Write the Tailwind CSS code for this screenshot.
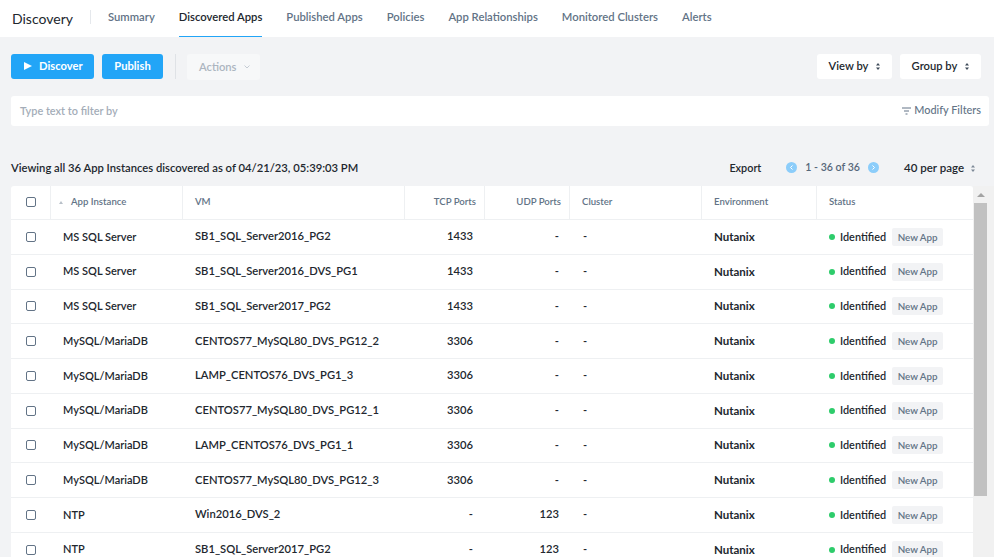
<!DOCTYPE html>
<html lang="en">
<head>
    <meta charset="UTF-8">
    <title>Discovery</title>
    <script src="https://cdn.jsdelivr.net/npm/@tailwindcss/browser@4"></script>
</head>
<body class="bg-[#f2f3f5] h-[557px] overflow-hidden font-['Lato',sans-serif] text-[11.2px] text-[#22272e]">

    <!-- Top nav -->
    <nav class="h-[37px] bg-white flex items-stretch pl-3">
        <div class="flex items-center">
            <span class="text-[14px] text-[#22272e] w-[78px] pb-[1px]">Discovery</span>
            <span class="w-px h-[14px] bg-[#e5e8ec] mr-[17px] mb-[3px]"></span>
        </div>
        <div class="flex gap-[24px] font-semibold text-[#627386] text-[11.28px]">
            <a class="pt-[9px]">Summary</a>
            <a class="pt-[9px] text-[#22272e] border-b border-[#22a5f7]">Discovered Apps</a>
            <a class="pt-[9px]">Published Apps</a>
            <a class="pt-[9px]">Policies</a>
            <a class="pt-[9px]">App Relationships</a>
            <a class="pt-[9px]">Monitored Clusters</a>
            <a class="pt-[9px]">Alerts</a>
        </div>
    </nav>

    <!-- Toolbar -->
    <div class="flex items-center mt-[17px] ml-[11px] mr-[13px] h-[25px] font-semibold">
        <button class="h-[25px] w-[83px] bg-[#22a5f7] rounded-[3px] text-white flex items-center pl-[13px] pb-[1px] gap-[7px] font-bold">
            <svg class="w-[8px] h-[8px]" viewBox="0 0 8 8" fill="#fff"><path d="M0 0l8 4-8 4z"/></svg>
            Discover
        </button>
        <button class="h-[25px] w-[61px] ml-[8px] pb-[1px] bg-[#22a5f7] rounded-[3px] text-white font-bold">Publish</button>
        <span class="w-px h-[25px] bg-[#dfe2e6] ml-[12px] mr-[11px]"></span>
        <button class="h-[26px] w-[73px] bg-[#f7f8f9] rounded-[3px] text-[#acb5c0] flex items-center pl-[12px] pt-[1px] gap-[7px]">
            Actions
            <svg class="w-[6px] h-[4px]" viewBox="0 0 6 4" fill="none" stroke="#c5ccd4"><path d="M.5.5L3 3 5.500.5"/></svg>
        </button>
        <button class="ml-auto h-[25px] w-[75px] bg-white rounded-[3px] flex items-center justify-center gap-[8px] pb-[1px]">
            View by
            <svg class="w-[4px] h-[7px]" viewBox="0 0 4 7" fill="#3d4a58"><path d="M2 0l2 2.500H0zM2 7L0 4.500h4z"/></svg>
        </button>
        <button class="ml-[8px] h-[25px] w-[81px] bg-white rounded-[3px] flex items-center justify-center gap-[8px] pb-[1px]">
            Group by
            <svg class="w-[4px] h-[7px]" viewBox="0 0 4 7" fill="#3d4a58"><path d="M2 0l2 2.500H0zM2 7L0 4.500h4z"/></svg>
        </button>
    </div>

    <!-- Filter bar -->
    <div class="mt-[17px] ml-[11px] mr-[5px] h-[30px] bg-white rounded-[3px] flex items-center justify-between pl-[9px] pr-[8px]">
        <span class="font-semibold text-[#a4adb8] text-[10.9px]">Type text to filter by</span>
        <span class="flex items-center gap-[3px] text-[#627386] font-medium text-[10.9px] pb-[2px]">
            <svg class="w-[9px] h-[8px] mt-[2px]" viewBox="0 0 9 8" fill="none" stroke="#627386"><path d="M0 1h9M2 4h5M3.500 7h2"/></svg>
            Modify Filters
        </span>
    </div>

    <!-- Summary line -->
    <div class="mt-[32px] ml-[11px] mr-[19px] h-[20px] flex items-center font-semibold">
        <span class="text-[11.24px]">Viewing all 36 App Instances discovered as of 04/21/23, 05:39:03 PM</span>
        <span class="ml-auto text-[10.8px]">Export</span>
        <span class="ml-[25px] flex items-center gap-[8px] text-[#56677a] text-[10.6px]">
            <span class="w-[11px] h-[11px] rounded-full bg-[#8ccdfa] flex items-center justify-center">
                <svg class="w-[3px] h-[5px]" viewBox="0 0 3 5" fill="none" stroke="#fff"><path d="M2.500.5L.5 2.500l2 2"/></svg>
            </span>
            1 - 36 of 36
            <span class="w-[11px] h-[11px] rounded-full bg-[#8ccdfa] flex items-center justify-center">
                <svg class="w-[3px] h-[5px]" viewBox="0 0 3 5" fill="none" stroke="#fff"><path d="M.5.5l2 2-2 2"/></svg>
            </span>
        </span>
        <span class="ml-[25px] text-[11.5px]">40 per page</span>
        <svg class="ml-[7px] w-[4px] h-[7px]" viewBox="0 0 4 7" fill="#7c8896"><path d="M2 0l2 2.500H0zM2 7L0 4.500h4z"/></svg>
    </div>

    <!-- Table + scrollbar -->
    <div class="mt-[8px] ml-[11px] h-[371px] overflow-hidden flex">
        <div class="w-[962px] bg-white rounded-t-[3px]">
            <div class="h-[34px] flex border-b border-[#eef0f2] text-[9.6px] font-semibold text-[#627386]">
                <div class="w-[40px] border-r border-[#eef0f2] flex items-center pl-[15px] pb-[1px]">
                    <span class="w-[10px] h-[10px] border border-[#627386] rounded-[2px] bg-white"></span>
                </div>
                <div class="w-[132px] border-r border-[#eef0f2] flex items-center pl-[8px] gap-[8px]">
                    <svg class="w-[4px] h-[3px]" viewBox="0 0 4 3" fill="#b8c0c9"><path d="M2 0l2 3H0z"/></svg>
                    App Instance
                </div>
                <div class="w-[222px] border-r border-[#eef0f2] flex items-center pl-[12px]">VM</div>
                <div class="w-[80px] border-r border-[#eef0f2] flex items-center justify-end pr-[8px]">TCP Ports</div>
                <div class="w-[85px] border-r border-[#eef0f2] flex items-center justify-end pr-[8px]">UDP Ports</div>
                <div class="w-[132px] border-r border-[#eef0f2] flex items-center pl-[12px]">Cluster</div>
                <div class="w-[115px] border-r border-[#eef0f2] flex items-center pl-[12px]">Environment</div>
                <div class="flex-1 flex items-center pl-[12px]">Status</div>
            </div>
            <div id="rows" class="font-semibold"></div>
        </div>
        <!-- Scrollbar -->
        <div class="w-[21px] bg-[#f1f1f1] pl-[1px]">
            <div class="w-[13px] h-[17px] flex items-center justify-center">
                <svg class="w-[8px] h-[4px]" viewBox="0 0 8 4" fill="#a3a3a3"><path d="M4 0l4 4H0z"/></svg>
            </div>
            <div class="w-[13px] h-[293px] bg-[#c1c1c1]"></div>
        </div>
    </div>

    <script>
        const apps = [
            ['MS SQL Server', 'SB1_SQL_Server2016_PG2', '1433', '-'],
            ['MS SQL Server', 'SB1_SQL_Server2016_DVS_PG1', '1433', '-'],
            ['MS SQL Server', 'SB1_SQL_Server2017_PG2', '1433', '-'],
            ['MySQL/MariaDB', 'CENTOS77_MySQL80_DVS_PG12_2', '3306', '-'],
            ['MySQL/MariaDB', 'LAMP_CENTOS76_DVS_PG1_3', '3306', '-'],
            ['MySQL/MariaDB', 'CENTOS77_MySQL80_DVS_PG12_1', '3306', '-'],
            ['MySQL/MariaDB', 'LAMP_CENTOS76_DVS_PG1_1', '3306', '-'],
            ['MySQL/MariaDB', 'CENTOS77_MySQL80_DVS_PG12_3', '3306', '-'],
            ['NTP', 'Win2016_DVS_2', '-', '123'],
            ['NTP', 'SB1_SQL_Server2017_PG2', '-', '123']
        ];

        document.getElementById('rows').innerHTML = apps.map(([app, vm, tcp, udp]) => `
            <div class="h-[34.75px] flex items-center border-b border-[#eef0f2]">
                <div class="w-[40px] pl-[15px]"><span class="block w-[10px] h-[10px] border border-[#627386] rounded-[2px]"></span></div>
                <div class="w-[132px] pl-[12px] text-[11px]">${app}</div>
                <div class="w-[222px] pl-[12px]">${vm}</div>
                <div class="w-[80px] text-right pr-[12px]">${tcp}</div>
                <div class="w-[85px] text-right pr-[11px]">${udp}</div>
                <div class="w-[132px] pl-[13px]">-</div>
                <div class="w-[115px] pl-[12px] font-bold text-[11.5px] pb-[1px]">Nutanix</div>
                <div class="flex-1 pl-[12px] flex items-center text-[10.9px]">
                    <span class="w-[6px] h-[6px] rounded-full bg-[#2ecc6b] mr-[5px]"></span>Identified
                    <span class="ml-[6px] h-[18px] w-[51px] flex items-center justify-center bg-[#f2f3f5] rounded-[2px] text-[9.8px] text-[#627386]">New App</span>
                </div>
            </div>`).join('');
    </script>

</body>
</html>
